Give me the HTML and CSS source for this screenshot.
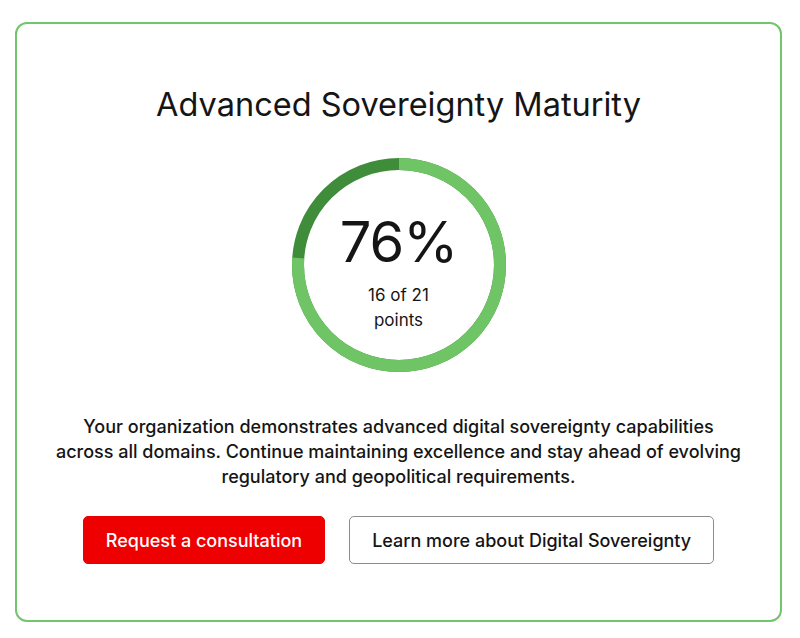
FILE: index.html
```html
<!DOCTYPE html>
<html lang="en">
<head>
<meta charset="utf-8">
<link rel="stylesheet" href="styles.css">
</head>
<body>
<div class="card">
  <h1 class="title">Advanced Sovereignty Maturity</h1>
  <div class="gauge">
    <svg class="ring" width="214" height="214" viewBox="0 0 214 214">
      <circle class="track" cx="107" cy="107" r="101" />
      <circle class="progress" cx="107" cy="107" r="101" stroke-dasharray="482.3 634.6" />
    </svg>
    <div class="gauge-text">
      <div class="pct">76%</div>
      <div class="pts">16 of 21<br>points</div>
    </div>
  </div>
  <p class="desc">Your organization demonstrates advanced digital sovereignty capabilities across all domains. Continue maintaining excellence and stay ahead of evolving regulatory and geopolitical requirements.</p>
  <div class="actions">
    <button class="btn btn-primary">Request a consultation</button>
    <button class="btn btn-secondary">Learn more about Digital Sovereignty</button>
  </div>
</div>
</body>
</html>
```
FILE: styles.css
```css
* { box-sizing: border-box; }
html, body { margin: 0; padding: 0; background: #fff; }
body {
  font-family: Inter, "Open Sans", sans-serif;
  color: #151515;
  padding: 22px 18px 0 15px;
}
.card {
  width: 767px;
  height: 600px;
  border: 2px solid #72c46d;
  border-radius: 12px;
  display: flex;
  flex-direction: column;
  align-items: center;
  padding-top: 62px;
}
.title {
  margin: 0;
  font-size: 32.5px;
  font-weight: 400;
  line-height: 38px;
}
.gauge {
  position: relative;
  width: 214px;
  height: 214px;
  margin-top: 34px;
}
.ring { display: block; transform: rotate(-90deg); }
.track { fill: none; stroke: #3f8d3a; stroke-width: 12; }
.progress { fill: none; stroke: #6fc466; stroke-width: 12; }
.gauge-text {
  position: absolute;
  inset: 0;
  display: flex;
  flex-direction: column;
  align-items: center;
  justify-content: flex-start;
  padding-top: 54px;
  text-align: center;
}
.pct {
  font-size: 56px;
  line-height: 60px;
  font-weight: 400;
  letter-spacing: -1px;
}
.pts {
  font-size: 17px;
  line-height: 25px;
  margin-top: 11px;
}
.desc {
  margin: 42px 0 0;
  width: 688px;
  text-align: center;
  font-size: 18px;
  line-height: 25px;
  font-weight: 500;
}
.actions {
  display: flex;
  gap: 24px;
  margin-top: 27px;
}
.btn {
  font-family: inherit;
  font-size: 18px;
  font-weight: 500;
  height: 48px;
  border-radius: 5px;
  padding: 0 22px;
  cursor: pointer;
}
.btn-primary {
  background: #ee0000;
  color: #fff;
  border: 1px solid #ee0000;
}
.btn-secondary {
  background: #fff;
  color: #151515;
  border: 1px solid #8a8d90;
}
```
